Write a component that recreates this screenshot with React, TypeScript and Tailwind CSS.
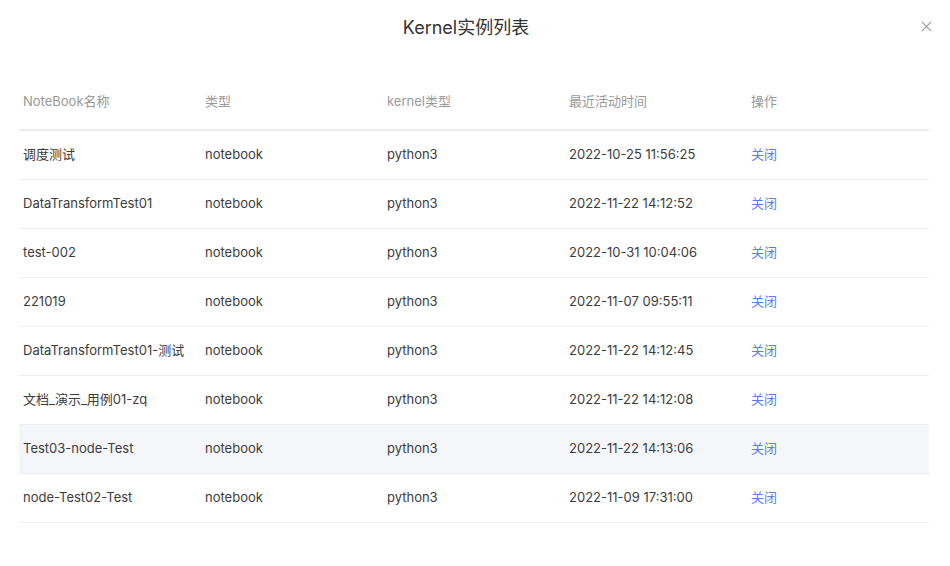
import React from 'react'

const rows = [
  { name: '调度测试', type: 'notebook', kernel: 'python3', time: '2022-10-25 11:56:25' },
  { name: 'DataTransformTest01', type: 'notebook', kernel: 'python3', time: '2022-11-22 14:12:52' },
  { name: 'test-002', type: 'notebook', kernel: 'python3', time: '2022-10-31 10:04:06' },
  { name: '221019', type: 'notebook', kernel: 'python3', time: '2022-11-07 09:55:11' },
  { name: 'DataTransformTest01-测试', type: 'notebook', kernel: 'python3', time: '2022-11-22 14:12:45' },
  { name: '文档_演示_用例01-zq', type: 'notebook', kernel: 'python3', time: '2022-11-22 14:12:08' },
  { name: 'Test03-node-Test', type: 'notebook', kernel: 'python3', time: '2022-11-22 14:13:06', hover: true },
  { name: 'node-Test02-Test', type: 'notebook', kernel: 'python3', time: '2022-11-09 17:31:00' },
]

const headers = ['NoteBook名称', '类型', 'kernel类型', '最近活动时间', '操作']

const App = () => {
  return (
    <div className="w-[950px] h-[566px] bg-white relative font-['Inter','Noto_Sans_CJK_SC',sans-serif]">
      <div className="h-[55px] flex items-center justify-center">
        <h2 className="text-[18px] text-[#333] pr-[18px]">Kernel实例列表</h2>
      </div>
      <button className="absolute right-[18px] top-[21px] w-[11px] h-[11px] text-[#999]">
        <svg viewBox="0 0 12 12" width="11" height="11" stroke="currentColor" strokeWidth="1.2" fill="none">
          <path d="M1 1L11 11M11 1L1 11" />
        </svg>
      </button>
      <div className="mx-[19px] mt-[20px] w-[910px]">
        <div className="grid grid-cols-5 h-[56px] items-center border-b-2 border-[#e9ecf2] text-[13px] text-[#999]">
          {headers.map((h) => (
            <div key={h} className="pl-[4px]">{h}</div>
          ))}
        </div>
        {rows.map((r) => (
          <div
            key={r.name}
            className={`grid grid-cols-5 h-[49px] items-center border-b border-[#ebedf2] text-[13px] text-[#3c3c3c] ${r.hover ? 'bg-[#f5f6fa]' : ''}`}
          >
            <div className="pl-[4px]">{r.name}</div>
            <div className="pl-[4px]">{r.type}</div>
            <div className="pl-[4px]">{r.kernel}</div>
            <div className="pl-[4px]">{r.time}</div>
            <div className="pl-[4px]">
              <a className="text-[#5b7cf0] cursor-pointer">关闭</a>
            </div>
          </div>
        ))}
      </div>
    </div>
  )
}

export default App
